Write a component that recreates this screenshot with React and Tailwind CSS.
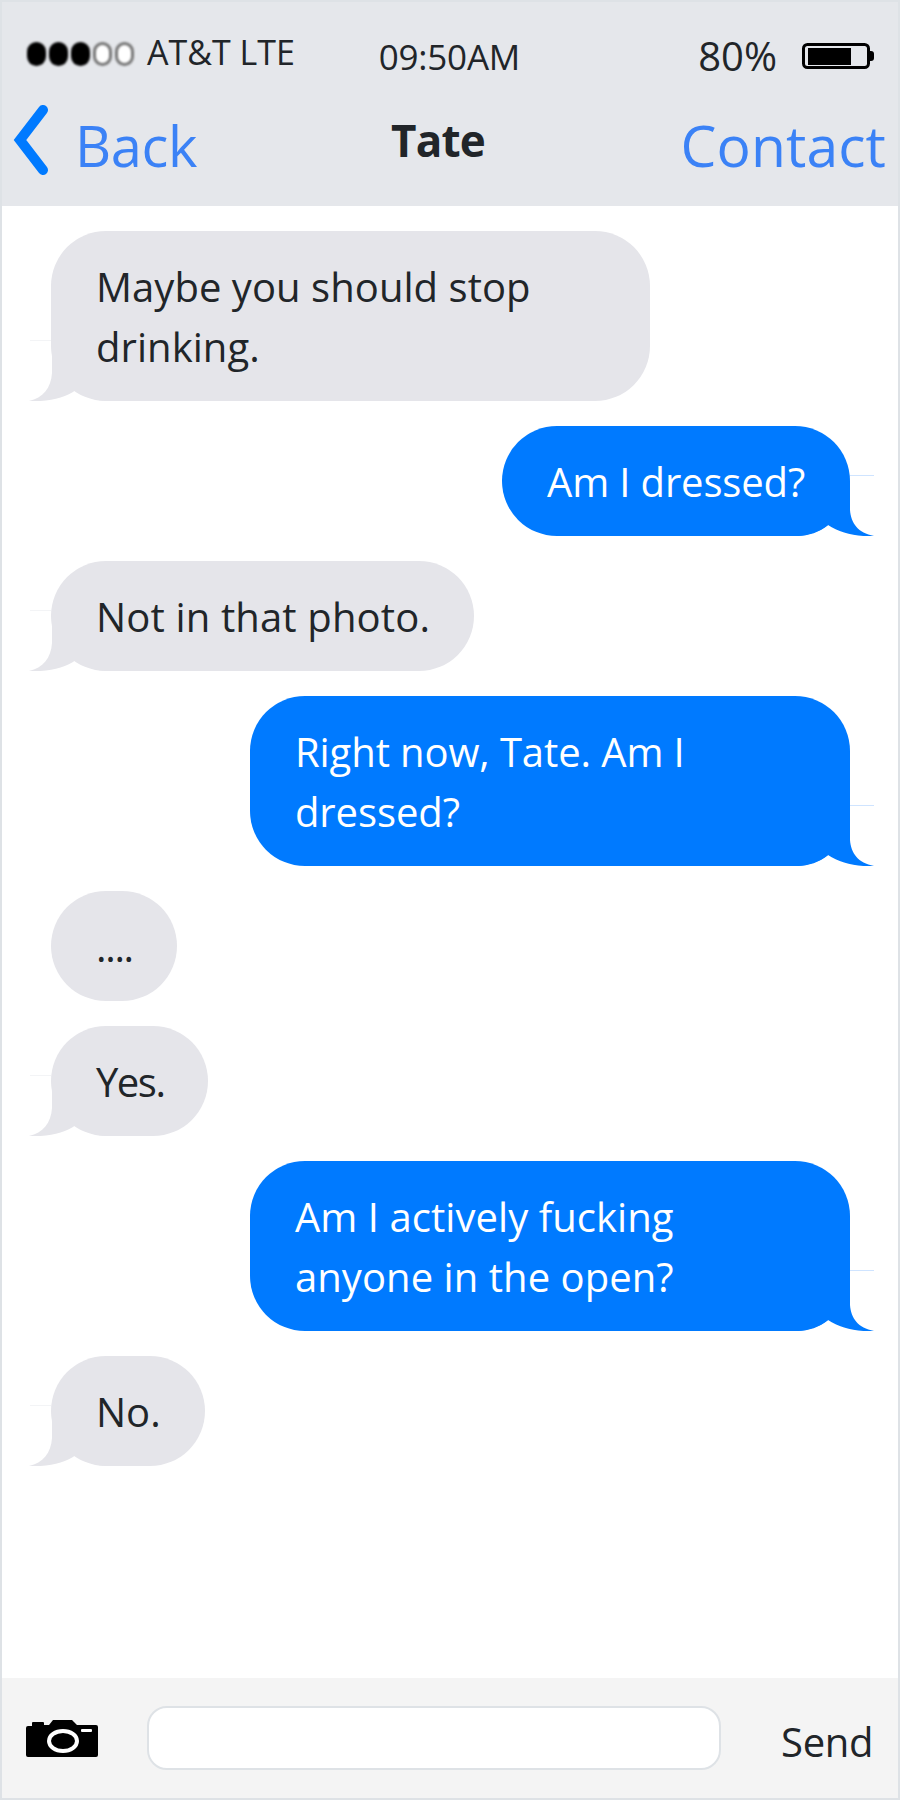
const font = { fontFamily: '"Open Sans", "Noto Sans", sans-serif' };

function Tail({ side, color }) {
  if (side === 'left') {
    return (
      <>
        <span className="absolute left-[-21px] bottom-[60px] h-px w-[21px] bg-[#f3f4f6]" />
        <svg className="absolute left-[-22px] bottom-0" width="82" height="55" viewBox="0 0 82 55">
          <path d="M23 0 L23 27 C22 42 14 52 0 55 C20 56 36 52 47 44 C56 51 68 55 79 55 L82 55 L82 0 Z" fill={color} />
        </svg>
      </>
    );
  }
  return (
    <>
      <span className="absolute right-[-24px] bottom-[60px] h-px w-[24px] bg-[#cfe4ff]" />
      <svg className="absolute right-[-24px] bottom-0" width="80" height="55" viewBox="0 0 80 55">
        <path d="M56 0 L56 29 C57 42 64 52 80 55 C62 56 46 52 34 44 C26 51 14 55 4 55 L0 55 L0 0 Z" fill={color} />
      </svg>
    </>
  );
}

function Bubble({ me, tail = true, track = 'tracking-[0px]', children }) {
  const color = me ? '#007aff' : '#e5e5ea';
  return (
    <div className={me ? 'flex justify-end pr-[48px]' : 'flex justify-start pl-[49px]'}>
      <div className={(me ? 'max-w-[600px] bg-[#007aff] pl-[45px] pr-[45px] text-white' : 'max-w-[599px] bg-[#e5e5ea] pl-[45px] pr-[44px] text-[#212529]') + ' relative rounded-[55px] pb-[24px] pt-[26px] text-[40px] leading-[60px] ' + track}>
        <span className="relative z-10 block">{children}</span>
        {tail && <Tail side={me ? 'right' : 'left'} color={color} />}
      </div>
    </div>
  );
}

function Signal() {
  return (
    <div className="flex gap-[3px] blur-[1px]">
      {[0, 1, 2].map((i) => (
        <span key={i} className="h-[24px] w-[19px] rounded-full bg-black" />
      ))}
      {[0, 1].map((i) => (
        <span key={i} className="h-[24px] w-[19px] rounded-full border-[3px] border-[#777] bg-white" />
      ))}
    </div>
  );
}

function Battery() {
  return (
    <svg width="72" height="26" viewBox="0 0 72 26">
      <rect x="1.5" y="1.5" width="65" height="23" rx="4" fill="none" stroke="#000" strokeWidth="3" />
      <rect x="6" y="5" width="43" height="17" fill="#000" />
      <path d="M68 8 h1 a3 3 0 0 1 3 3 v4 a3 3 0 0 1 -3 3 h-1 z" fill="#000" />
    </svg>
  );
}

function Camera() {
  return (
    <svg width="72" height="37" viewBox="0 0 72 37" fill="none">
      <path d="M2 6 H6 V3 Q6 2 7 2 H17 Q18 2 18 3 V5 H23 L27 0 H46 L51 5 H70 Q72 5 72 7 V35 Q72 37 70 37 H2 Q0 37 0 35 V8 Q0 6 2 6 Z" fill="#000" />
      <ellipse cx="37" cy="21" rx="14" ry="10" fill="none" stroke="#fff" strokeWidth="4" />
      <rect x="55" y="9" width="11" height="3" rx="1" fill="#fff" />
    </svg>
  );
}

export default function App() {
  return (
    <div style={font} className="flex h-[1800px] w-[900px] flex-col border-2 border-[#dee2e6] bg-white text-[#212529]">
      <header className="h-[204px] bg-[#e5e7eb]">
        <div className="grid h-[104px] grid-cols-3 items-center">
          <div className="flex items-center gap-[13px] pl-[25px]">
            <Signal />
            <span className="whitespace-nowrap pb-[4px] text-[34px] leading-none">AT&amp;T LTE</span>
          </div>
          <div className="whitespace-nowrap pl-[78px] pt-[4px] text-[35px] leading-none tracking-[-0.2px]">09:50AM</div>
          <div className="flex items-center justify-end gap-[25px] pr-[24px] pt-[4px]">
            <span className="text-[40px] leading-none">80%</span>
            <Battery />
          </div>
        </div>
        <div className="-mt-[1px] flex h-[70px] items-start">
          <svg className="ml-[10px]" width="37" height="70" viewBox="0 0 37 70">
            <path d="M31 5 L8 35 L31 65" fill="none" stroke="#007aff" strokeWidth="10" strokeLinecap="round" strokeLinejoin="miter" />
          </svg>
          <span className="ml-[26px] w-[316px] pt-[12px] text-[56px] leading-none tracking-[-0.4px] text-[#3b82f6]">Back</span>
          <span className="w-[100px] pt-[13px] text-[44px] font-bold leading-none tracking-[-0.8px]">Tate</span>
          <span className="ml-auto pr-[12px] pt-[12px] text-[57px] leading-none tracking-[0.1px] text-[#3b82f6]">Contact</span>
        </div>
      </header>

      <main className="flex flex-1 flex-col gap-[25px] pt-[25px]">
        <Bubble track="tracking-[0.05px]">Maybe you should stop drinking.</Bubble>
        <Bubble me track="tracking-[-0.15px]">Am I dressed?</Bubble>
        <Bubble track="tracking-[0.15px]">Not in that photo.</Bubble>
        <Bubble me track="tracking-[-0.1px]">Right now, Tate. Am I dressed?</Bubble>
        <Bubble tail={false} track="tracking-[-1.3px]">....</Bubble>
        <Bubble track="tracking-[-1.5px]">Yes.</Bubble>
        <Bubble me track="tracking-[0.05px]">Am I actively fucking anyone in the open?</Bubble>
        <Bubble>No.</Bubble>
      </main>

      <footer className="flex h-[120px] items-center bg-[#f4f4f4]">
        <div className="ml-[24px] mt-[1px]"><Camera /></div>
        <div className="ml-[49px] h-[64px] w-[574px] rounded-[20px] border-2 border-[#dee2e6] bg-white" />
        <span className="ml-[60px] pt-[8px] text-[40px] leading-none tracking-[-0.3px]">Send</span>
      </footer>
    </div>
  );
}
